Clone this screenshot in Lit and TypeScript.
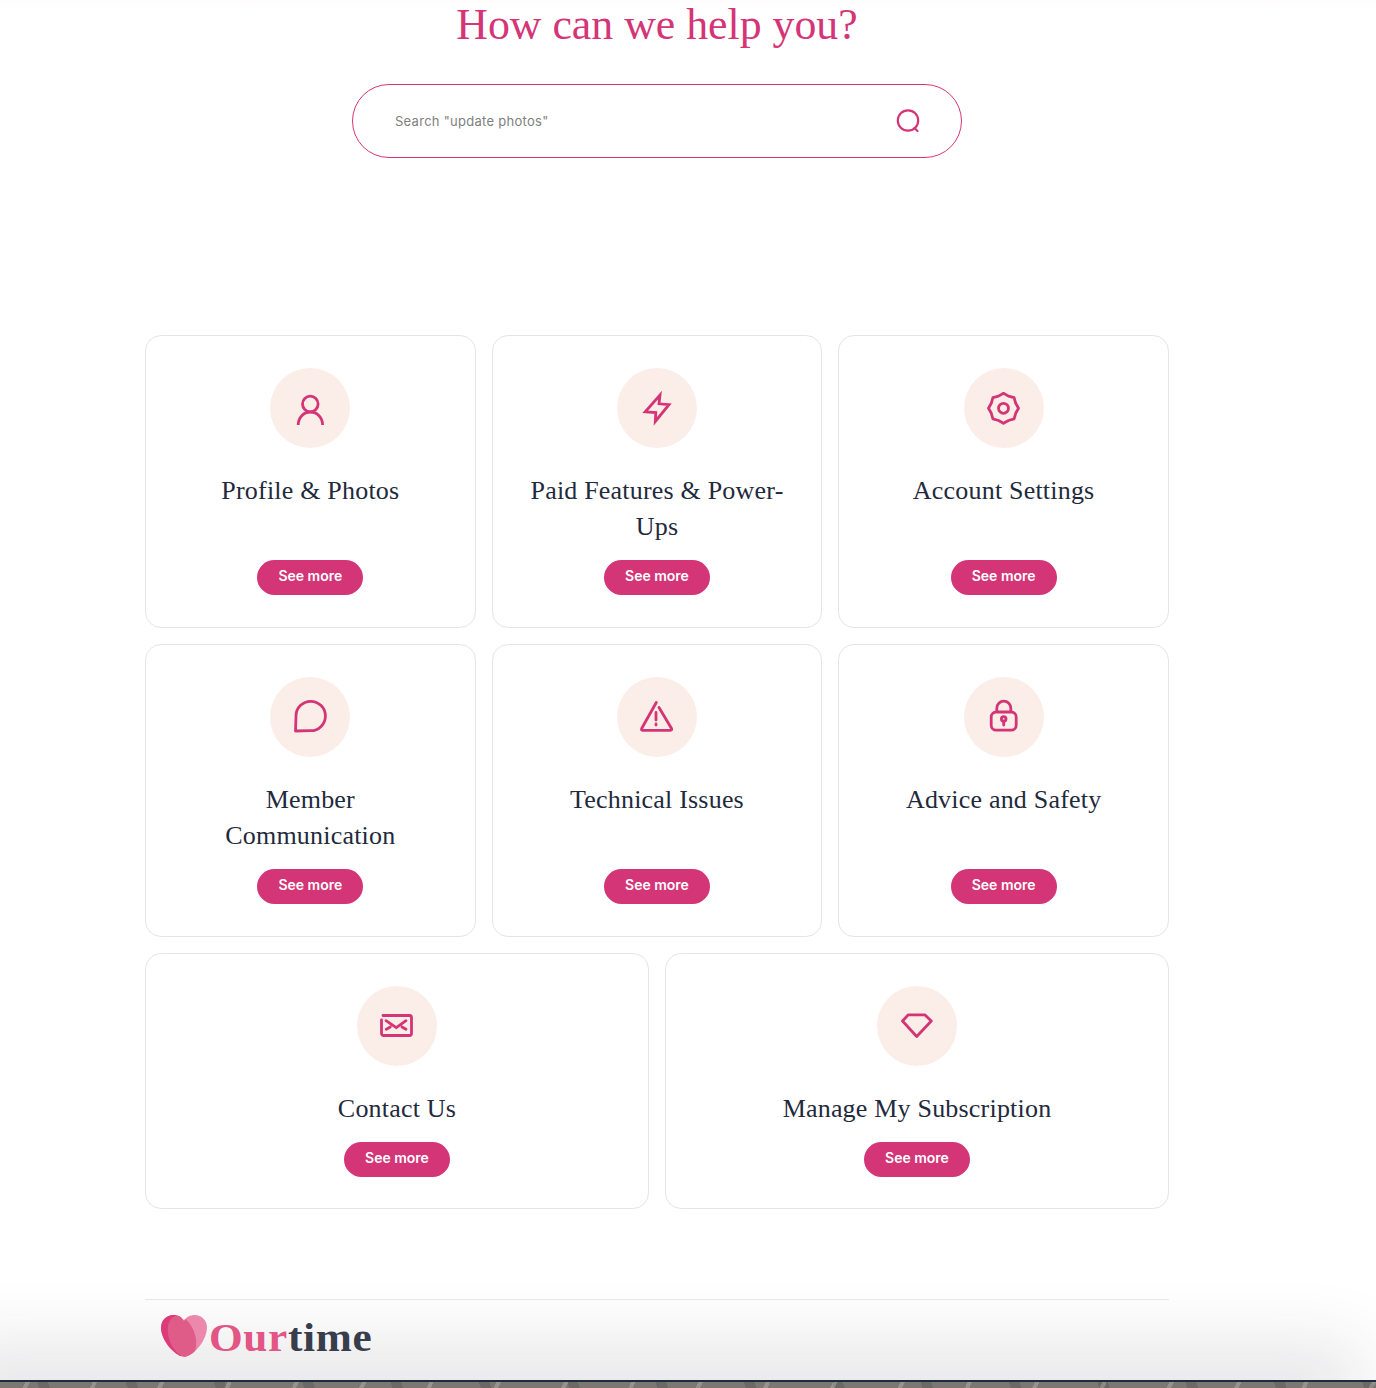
import { LitElement, html, css, svg } from "lit";
import { customElement } from "lit/decorators.js";

const icons: Record<string, unknown> = {
  user: svg`<circle cx="20.3" cy="16" r="7.8"/><path d="M8.2 37c0-7.500 5.500-13 12.200-13s12.200 5.500 12.200 13" stroke-linecap="butt"/>`,
  bolt: svg`<path d="M23 7 22 15.800 32 16.600 18.300 33.500 18.800 24.600 8.200 23.800Z" stroke-linejoin="miter" stroke-miterlimit="8"/>`,
  gear: svg`<g transform="translate(19.500 20.300)"><path d="M0-15 5-12.200 10.600-10.600 12.200-5 15 0 12.200 5 10.600 10.600 5 12.200 0 15-5 12.200-10.600 10.600-12.200 5-15 0-12.200-5-10.600-10.600-5-12.200Z"/><circle r="5"/></g>`,
  chat: svg`<path d="M5.500 34 6 19A14.700 14.700 0 1 1 20.700 33.700Z"/>`,
  warn: svg`<path d="M19.300 5.500 4.800 31.300c-.8 1.500 0 2 1 2h27.600c1.200 0 1.800-.6 1-2L22 10.500"/><path d="M19 15.500v7.500M19 27v1"/>`,
  lock: svg`<rect x="7.200" y="15" width="25" height="18.200" rx="5"/><path d="M12.800 14v-2.800a7 7 0 0 1 14 0V14"/><circle cx="19.700" cy="22" r="2.300"/><path d="M19.700 24v4"/>`,
  mail: svg`<path d="M6 9.500h26.500a2 2 0 0 1 2 2v16a2 2 0 0 1-2 2h-26a2 2 0 0 1-2-2V14"/><path d="M9 14.700 19.300 21.700 29 14.700M9.300 23.300l4-2.300M29 23.300l-4-2.300"/>`,
  gem: svg`<path d="M11.300 8.800H27.800L34.300 15 19.700 30.500 5.500 15Z"/>`,
};

const cards = [
  ["user", "Profile & Photos"],
  ["bolt", "Paid Features & Power-Ups"],
  ["gear", "Account Settings"],
  ["chat", "Member Communication"],
  ["warn", "Technical Issues"],
  ["lock", "Advice and Safety"],
  ["mail", "Contact Us", "wide"],
  ["gem", "Manage My Subscription", "wide"],
];

@customElement("app-root")
export class AppRoot extends LitElement {
  static styles = css`
    :host { display: block; position: relative; height: 1388px; overflow: hidden; font-family: Inter, sans-serif;
      background: linear-gradient(#fffbfc, #fff 10px); }
    .fade { position: absolute; left: -20px; right: 50px; bottom: 0; height: 8px; box-shadow: 0 0 70px 35px rgba(40, 40, 60, .12); }
    .strip { position: absolute; left: 0; right: 0; bottom: 0; height: 8px; border-top: 2px solid #1e2a44; box-sizing: border-box;
      background:
        repeating-linear-gradient(115deg, transparent 0 23px, rgba(200, 198, 190, .35) 23px 27px, transparent 27px 61px),
        repeating-linear-gradient(70deg, transparent 0 37px, rgba(40, 40, 40, .18) 37px 47px, transparent 47px 83px),
        #7a7871; }
    .page { position: relative; width: 1024px; margin-left: 145px; }
    h1 { margin: 0; font: 400 43.800px/48px "Liberation Serif", serif; color: #d43577; text-align: center; }
    .search { width: 610px; height: 74px; box-sizing: border-box; margin: 36px auto 177px; padding: 0 40px 0 42px; border: 1px solid #d43577; border-radius: 37px;
      display: flex; align-items: center; justify-content: space-between; background: #fff; }
    .search span { font-size: 13px; color: #808080; letter-spacing: .28px; }
    .search svg { width: 26px; height: 26px; fill: none; stroke: #d43577; stroke-width: 2.200; }
    .grid { display: grid; grid-template-columns: repeat(6, 1fr); gap: 16px; }
    .card { grid-column: span 2; box-sizing: border-box; height: 293px; padding: 32px; border: 1px solid #e5e5e7; border-radius: 16px; background: #fff;
      display: flex; flex-direction: column; align-items: center; text-align: center; }
    .card.wide { grid-column: span 3; height: 256px; }
    .circle { width: 80px; height: 80px; flex: none; border-radius: 50%; background: #fbeee9; display: flex; align-items: center; justify-content: center; }
    .circle svg { width: 40px; height: 40px; overflow: visible; fill: none; stroke: #d43577; stroke-width: 2.800; stroke-linecap: round; stroke-linejoin: round; }
    h2 { margin: 25px 0 0; padding: 0 4px; box-sizing: border-box; min-height: 72px; width: 100%; font: 400 26px/36px "Liberation Serif", serif; color: #1f2a3d; letter-spacing: .2px; }
    .wide h2 { min-height: 36px; }
    .btn { margin-top: 15px; width: 106px; height: 34.500px; flex: none; border-radius: 18px; background: #d43577; color: #fff; font-size: 14px; font-weight: 600; line-height: 32px; }
    .foot { margin-top: 90px; border-top: 1px solid #e6e6e8; padding: 15px 0 0 16px; display: flex; align-items: flex-start; }
    .foot svg { width: 46px; height: 42px; flex: none; }
    .logo { margin: 1px 0 0 2px; font: 700 39px/44px "Liberation Serif", serif; color: #e25585; transform: scaleX(1.11); transform-origin: left; letter-spacing: .6px; }
    .logo b { color: #373d4b; }
  `;

  render() {
    return html`
      <div class="fade"></div>
      <div class="strip"></div>
      <main class="page">
        <h1>How can we help you?</h1>
        <div class="search">
          <span>Search "update photos"</span>
          <svg viewBox="0 0 26 26"><circle cx="13" cy="12.500" r="10.200"/><path d="M19.500 20l3 3" stroke-linecap="round"/></svg>
        </div>
        <div class="grid">
          ${cards.map(([icon, title, wide]) => html`
            <section class="card ${wide ?? ""}">
              <div class="circle"><svg viewBox="0 0 40 40">${icons[icon]}</svg></div>
              <h2>${title}</h2>
              <div class="btn">See more</div>
            </section>`)}
        </div>
        <footer class="foot">
          <svg viewBox="0 0 46 42">
            <defs><clipPath id="heart"><path d="M23 42C12 40 0 24 0 13 0 5 6 0 12 0c5 0 9 2 11 6 2-4 6-6 11-6 6 0 12 5 12 12 0 12-11 28-23 30Z"/></clipPath></defs>
            <g clip-path="url(#heart)">
              <rect width="46" height="42" fill="#ed88ad"/>
              <rect width="20" height="42" fill="#dc3a78"/>
              <ellipse cx="21" cy="21.500" rx="13" ry="21.500" transform="rotate(-20 21 21.500)" fill="#e05c88"/>
            </g>
          </svg>
          <div class="logo">Our<b>time</b></div>
        </footer>
      </main>`;
  }
}
